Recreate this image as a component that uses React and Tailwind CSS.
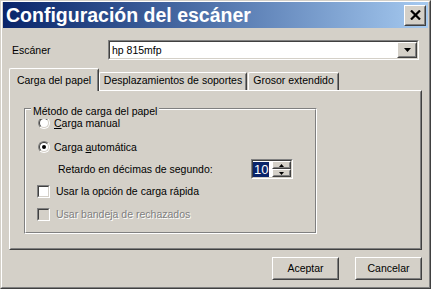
import React from 'react';

const FONT = { fontFamily: '"Liberation Sans", Arial, sans-serif' };

const Raised = ({ className = '', children }) => (
  <div className={`border border-t-white border-l-white border-r-[#404040] border-b-[#404040] ${className}`}>
    <div className="flex h-full w-full items-center justify-center border border-t-[#d4d0c8] border-l-[#d4d0c8] border-r-[#808080] border-b-[#808080] bg-[#d4d0c8]">
      {children}
    </div>
  </div>
);

const Sunken = ({ className = '', inner = 'bg-white', children }) => (
  <div className={`border border-t-[#808080] border-l-[#808080] border-r-white border-b-white ${className}`}>
    <div className={`flex h-full w-full border border-t-[#404040] border-l-[#404040] border-r-[#d4d0c8] border-b-[#d4d0c8] ${inner}`}>
      {children}
    </div>
  </div>
);

const Radio = ({ checked }) => (
  <div className="h-[12px] w-[12px] shrink-0 rounded-full border border-t-[#808080] border-l-[#808080] border-r-white border-b-white">
    <div className="flex h-full w-full items-center justify-center rounded-full border border-t-[#404040] border-l-[#404040] border-r-[#d4d0c8] border-b-[#d4d0c8] bg-white">
      {checked && <div className="h-[4px] w-[4px] rounded-full bg-black" />}
    </div>
  </div>
);

const Check = ({ disabled }) => (
  <Sunken className="h-[13px] w-[13px] shrink-0" inner={disabled ? 'bg-[#d4d0c8]' : 'bg-white'} />
);

const Down = ({ w = 7, h = 4 }) => (
  <svg width={w} height={h} viewBox={`0 0 ${w} ${h}`}>
    <polygon points={`0,0 ${w},0 ${w / 2},${h}`} fill="#000" />
  </svg>
);

const Up = ({ w = 5, h = 3 }) => (
  <svg width={w} height={h} viewBox={`0 0 ${w} ${h}`}>
    <polygon points={`0,${h} ${w},${h} ${w / 2},0`} fill="#000" />
  </svg>
);

export default function App() {
  return (
    <div
      style={FONT}
      className="h-[289px] w-[431px] overflow-hidden whitespace-nowrap border border-t-[#d4d0c8] border-l-[#d4d0c8] border-r-[#404040] border-b-[#404040] bg-[#d4d0c8] text-[10.5px] leading-[15px] text-black"
    >
      <div className="h-full w-full border border-t-white border-l-white border-r-[#808080] border-b-[#808080] px-[1px]">
        {/* title bar */}
        <div className="flex h-[26px] items-center justify-between bg-linear-to-r from-[#0a246a] to-[#a6caf0] pl-[3px] pr-[2px]">
          <span className="text-[19.5px] font-bold leading-[26px] text-white">Configuración del escáner</span>
          <Raised className="h-[21px] w-[22px]">
            <svg width="11" height="10" viewBox="0 0 11 10">
              <path d="M1 0.5 L10 9.5 M10 0.5 L1 9.5" stroke="#000" strokeWidth="2.2" />
            </svg>
          </Raised>
        </div>

        <div className="px-[6px]">
          {/* scanner row */}
          <div className="mt-[12px] flex h-[20px] items-center pl-[3px]">
            <span className="w-[96px]">Escáner</span>
            <Sunken className="h-[20px] w-[311px]">
              <span className="flex-1 self-center pl-[2px]">hp 815mfp</span>
              <Raised className="h-full w-[20px]">
                <Down />
              </Raised>
            </Sunken>
          </div>

          {/* tabs */}
          <div className="mt-[8px] flex h-[22px] items-end">
            <div className="relative z-10 -mb-[1px] flex h-[23px] w-[90px] justify-center rounded-t-[2px] border-l border-t border-r border-l-white border-t-white border-r-[#404040] bg-[#d4d0c8] pt-[4px]">
              <div className="absolute right-0 top-[1px] bottom-0 w-[1px] bg-[#808080]" />
              <span>Carga del papel</span>
            </div>
            <div className="relative flex h-[18px] w-[148px] justify-center rounded-t-[2px] border-l border-t border-r border-l-white border-t-white border-r-[#404040]">
              <div className="absolute right-0 top-[1px] bottom-0 w-[1px] bg-[#808080]" />
              <span>Desplazamientos de soportes</span>
            </div>
            <div className="relative ml-[1px] flex h-[18px] w-[91px] justify-center rounded-t-[2px] border-l border-t border-r border-l-white border-t-white border-r-[#404040]">
              <div className="absolute right-0 top-[1px] bottom-0 w-[1px] bg-[#808080]" />
              <span>Grosor extendido</span>
            </div>
          </div>

          {/* panel */}
          <div className="h-[160px] w-[413px] border border-t-white border-l-white border-r-[#404040] border-b-[#404040]">
            <div className="h-full w-full border border-t-[#d4d0c8] border-l-[#d4d0c8] border-r-[#808080] border-b-[#808080] pl-[13px] pt-[16px]">
              <div className="relative h-[126px] w-[293px] border border-t-[#808080] border-l-[#808080] border-r-white border-b-white">
                <span className="absolute -top-[5px] left-[6px] z-10 bg-[#d4d0c8] px-[2px]">Método de carga del papel</span>
                <div className="flex h-full w-full flex-col border border-t-white border-l-white border-r-[#808080] border-b-[#808080] pt-[5px]">
                  <div className="flex h-[16px] items-center gap-[4px] pl-[12px]">
                    <Radio />
                    <span><u>C</u>arga manual</span>
                  </div>
                  <div className="mt-[8px] flex h-[16px] items-center gap-[4px] pl-[12px]">
                    <Radio checked />
                    <span>Carga <u>a</u>utomática</span>
                  </div>
                  <div className="mt-[4px] flex h-[20px] items-center pl-[32px]">
                    <span className="w-[193px]">Retardo en décimas de segundo:</span>
                    <Sunken className="h-[20px] w-[42px]">
                      <div className="flex flex-1 items-center">
                        <span className="bg-[#0a246a] px-[1px] text-[13px] leading-[15px] text-white">10</span>
                      </div>
                      <div className="flex w-[19px] flex-col">
                        <Raised className="h-[8px] w-full">
                          <Up />
                        </Raised>
                        <Raised className="h-[8px] w-full">
                          <Down w={5} h={3} />
                        </Raised>
                      </div>
                    </Sunken>
                  </div>
                  <div className="mt-[4px] flex h-[16px] items-center gap-[6px] pl-[11px]">
                    <Check />
                    <span>Usar la opción de carga rápida</span>
                  </div>
                  <div className="mt-[7px] flex h-[16px] items-center gap-[6px] pl-[11px]">
                    <Check disabled />
                    <span className="text-[#808080] [text-shadow:1px_1px_0_#fff]">Usar bandeja de rechazados</span>
                  </div>
                </div>
              </div>
            </div>
          </div>

          {/* buttons */}
          <div className="mt-[7px] flex justify-end gap-[16px]">
            <Raised className="h-[23px] w-[67px]">
              <span>Aceptar</span>
            </Raised>
            <Raised className="h-[23px] w-[67px]">
              <span>Cancelar</span>
            </Raised>
          </div>
        </div>
      </div>
    </div>
  );
}
